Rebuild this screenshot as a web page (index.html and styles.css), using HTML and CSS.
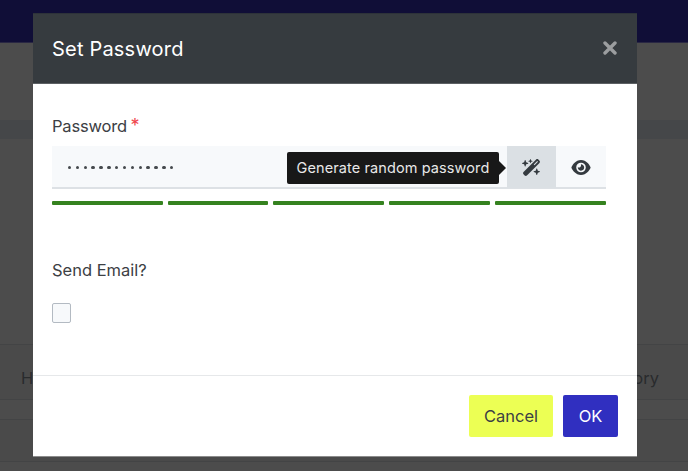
FILE: index.html
```html
<!DOCTYPE html>
<html lang="en">
<head>
<meta charset="utf-8">
<title>Set Password</title>
<link rel="stylesheet" href="styles.css">
</head>
<body>
<div class="page">
  <div class="topbar"></div>
  <div class="subbar"></div>
  <div class="band"></div>
  <div class="content"></div>
  <div class="table-head"><span>Hi</span><span>History</span></div>
  <div class="gap-row"></div>
  <div class="table-row"></div>
</div>
<section class="modal" role="dialog" aria-label="Set Password">
  <header class="modal-header">
    <h1>Set Password</h1>
    <button class="close" aria-label="Close"><svg viewBox="0 0 14 14"><path d="M2 2l10 10M12 2L2 12"/></svg></button>
  </header>
  <div class="modal-body">
    <div class="label label-password">Password <span class="required">*</span></div>
    <div class="field">
      <div class="dots"><i></i><i></i><i></i><i></i><i></i><i></i><i></i><i></i><i></i><i></i><i></i><i></i><i></i><i></i></div>
      <button class="tool tool-active" aria-label="Generate">
        <svg class="wand" viewBox="0 0 576 512"><path d="M234.7 42.7L197 56.8c-3 1.1-5 4-5 7.2s2 6.1 5 7.2l37.7 14.1L248.8 123c1.1 3 4 5 7.2 5s6.1-2 7.2-5l14.1-37.7L315 71.2c3-1.1 5-4 5-7.2s-2-6.1-5-7.2L277.3 42.7 263.2 5c-1.1-3-4-5-7.2-5s-6.1 2-7.2 5L234.7 42.7zM46.1 395.4c-18.7 18.7-18.7 49.1 0 67.9l34.6 34.6c18.7 18.7 49.1 18.7 67.9 0L529.9 116.5c18.7-18.7 18.7-49.1 0-67.9L495.3 14.1c-18.7-18.7-49.1-18.7-67.9 0L46.1 395.4zM484.6 82.6l-105 105-23.3-23.3 105-105 23.3 23.3zM7.5 117.2C3 118.9 0 123.2 0 128s3 9.1 7.5 10.8L64 160l21.2 56.5c1.7 4.5 6 7.5 10.8 7.5s9.1-3 10.8-7.5L128 160l56.5-21.2c4.5-1.7 7.5-6 7.5-10.8s-3-9.1-7.5-10.8L128 96 106.8 39.5C105.1 35 100.8 32 96 32s-9.1 3-10.8 7.5L64 96 7.5 117.2zm352 256c-4.5 1.7-7.5 6-7.5 10.8s3 9.1 7.5 10.8L416 416l21.2 56.5c1.7 4.5 6 7.5 10.8 7.5s9.1-3 10.8-7.5L480 416l56.5-21.2c4.5-1.7 7.5-6 7.5-10.8s-3-9.1-7.5-10.8L480 352l-21.2-56.5c-1.7-4.5-6-7.5-10.8-7.5s-9.1 3-10.8 7.5L416 352l-56.5 21.2z"/></svg>
        <span class="tooltip">Generate random password</span>
      </button>
      <button class="tool" aria-label="Show">
        <svg class="eye" viewBox="0 0 576 512"><path d="M288 32c-80.8 0-145.5 36.8-192.6 80.6C48.6 156 17.3 208 2.5 243.7c-3.3 7.9-3.3 16.7 0 24.6C17.3 304 48.6 356 95.4 399.4C142.5 443.2 207.2 480 288 480s145.5-36.8 192.6-80.6c46.8-43.5 78.1-95.4 93-131.1c3.3-7.9 3.3-16.7 0-24.6c-14.9-35.7-46.2-87.7-93-131.1C433.5 68.8 368.8 32 288 32zM144 256a144 144 0 1 1 288 0 144 144 0 1 1 -288 0zm144-64c0 35.3-28.7 64-64 64c-7.1 0-13.9-1.2-20.3-3.3c-5.5-1.8-11.9 1.6-11.7 7.4c.3 6.9 1.3 13.8 3.2 20.7c13.7 51.2 66.4 81.6 117.6 67.9s81.6-66.4 67.9-117.6c-11.1-41.5-47.8-69.4-88.6-71.1c-5.8-.2-9.2 6.1-7.4 11.7c2.1 6.4 3.3 13.2 3.3 20.3z"/></svg>
      </button>
    </div>
    <div class="strength"><i></i><i></i><i></i><i></i><i></i></div>
    <div class="label label-email">Send Email?</div>
    <div class="checkbox" role="checkbox" aria-checked="false"></div>
  </div>
  <footer class="modal-footer">
    <button class="btn btn-cancel">Cancel</button>
    <button class="btn btn-ok">OK</button>
  </footer>
</section>
</body>
</html>
```
FILE: styles.css
```css
* { box-sizing: border-box; }

body {
  margin: 0;
  width: 688px;
  height: 471px;
  overflow: hidden;
  position: relative;
  font-family: Inter, "Liberation Sans", sans-serif;
  font-size: 16.5px;
  color: #3c4044;
}

button {
  border: 0;
  padding: 0;
  font: inherit;
  color: inherit;
}

.page {
  display: flex;
  flex-direction: column;
  height: 471px;
  background: #4c4c4c;
}

.topbar { height: 43px; background: #100e37; border-bottom: 1px solid #292743; }
.subbar { height: 77px; }
.band { height: 19px; background: #454749; }
.content { height: 205px; }
.table-head {
  height: 56px;
  padding: 12px 29px 0 21px;
  border: solid #434445;
  border-width: 1px 0;
  background: #4a4a4a;
  display: flex;
  justify-content: space-between;
  align-items: center;
  color: #292b2d;
}
.gap-row { height: 19px; }
.table-row {
  height: 43px;
  border: solid #434445;
  border-width: 1px 0;
  background: #4a4a4a;
}

.modal {
  position: absolute;
  left: 33px;
  top: 13px;
  width: 604px;
  height: 444px;
  display: flex;
  flex-direction: column;
  background: #fff;
  border-bottom: 1px solid #8c8c8c;
  border-radius: 1px;
}

.modal-header {
  height: 71px;
  padding: 0 20px 2px 19px;
  display: flex;
  align-items: center;
  justify-content: space-between;
  background: #363b3f;
  border-top: 1px solid #2d3239;
  border-bottom: 1px solid #5c6063;
}

h1 {
  margin: 2px 0 0;
  font-size: 20px;
  font-weight: 400;
  letter-spacing: .2px;
  line-height: 28px;
  color: #fff;
}

.close { display: flex; background: none; }
.close svg {
  width: 14px;
  height: 14px;
  fill: none;
  stroke: #9b9d9f;
  stroke-width: 3.4;
  stroke-linecap: round;
}

.modal-body { height: 291px; padding: 30px 31px 0 19px; }
.label { line-height: 24px; height: 33px; }
.label-password { letter-spacing: -.17px; height: 32px; }
.required { color: #f0464d; font-size: 18px; line-height: 20px; margin-left: -1px; }

.field {
  display: flex;
  height: 43px;
  background: #f7f9fb;
  border-bottom: 2px solid #dde1e5;
}
.dots {
  flex: 1;
  display: flex;
  gap: 4.5px;
  padding: 20px 0 0 15.9px;
}
.dots i {
  width: 3.36px;
  height: 3.36px;
  border-radius: 50%;
  background: #45494d;
}

.tool {
  position: relative;
  width: 50px;
  height: 42px;
  display: flex;
  align-items: center;
  justify-content: center;
  background: none;
}
.tool-active { background: #dbe0e4; width: 49px; }
.tool svg { fill: #343a3f; }
.wand { width: 19px; height: 17px; }
.eye { width: 20px; height: 17px; margin-right: 1px; }

.tooltip {
  position: absolute;
  right: 57px;
  top: 6px;
  width: 212px;
  height: 32px;
  border-radius: 2px;
  background: #181818;
  color: #e8e8e8;
  font-size: 14.5px;
  letter-spacing: .1px;
  line-height: 31px;
  text-align: center;
  white-space: nowrap;
}
.tooltip::after {
  content: "";
  position: absolute;
  left: 100%;
  top: 9px;
  border: solid transparent;
  border-width: 7px 0 7px 7px;
  border-left-color: #181818;
}

.strength {
  display: grid;
  grid-template-columns: 111px 100px 111px 101px 111px;
  gap: 5px;
  padding-top: 12px;
}
.strength i { height: 4px; background: #35821f; border-radius: 1px; }

.label-email { margin-top: 53px; height: 45px; line-height: 24px; }
.checkbox {
  width: 19px;
  height: 20px;
  border: 1px solid #b3bac2;
  border-radius: 2px;
  background: #f7f9fb;
}

.modal-footer {
  flex: 1;
  display: flex;
  justify-content: flex-end;
  gap: 10px;
  padding: 19px 19px 0;
  border-top: 1px solid #e6e8ea;
}
.btn { height: 42px; border-radius: 2px; }
.btn-cancel { width: 84px; background: #ecff54; }
.btn-ok { width: 55px; background: #302fc0; color: #fff; }
```
